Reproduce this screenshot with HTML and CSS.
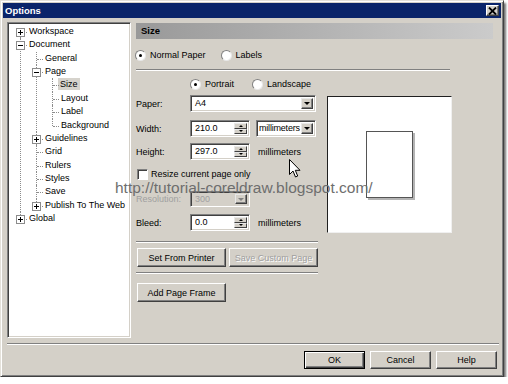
FILE: index.html
```html
<!DOCTYPE html>
<html lang="en">
<head>
    <meta charset="UTF-8">
    <title>Options</title>
    <link rel="stylesheet" href="styles.css">
</head>
<body>
    <div class="window">
        <div class="titlebar">
            <span class="title">Options</span>
            <span class="close">
                <svg width="9" height="8" viewBox="0 0 9 8"><path d="M1 0.5 L8 7.5 M8 0.5 L1 7.5" stroke="#000" stroke-width="1.8"/></svg>
            </span>
        </div>

        <div class="main">
            <div class="tree">
                <ul class="tree-root">
                    <li><span class="box plus"></span><span class="node">Workspace</span></li>
                    <li><span class="box"></span><span class="node">Document</span>
                        <ul>
                            <li><span class="node">General</span></li>
                            <li><span class="box"></span><span class="node">Page</span>
                                <ul>
                                    <li><span class="node selected">Size</span></li>
                                    <li><span class="node">Layout</span></li>
                                    <li><span class="node">Label</span></li>
                                    <li><span class="node">Background</span></li>
                                </ul>
                            </li>
                            <li><span class="box plus"></span><span class="node">Guidelines</span></li>
                            <li><span class="node">Grid</span></li>
                            <li><span class="node">Rulers</span></li>
                            <li><span class="node">Styles</span></li>
                            <li><span class="node">Save</span></li>
                            <li><span class="box plus"></span><span class="node">Publish To The Web</span></li>
                        </ul>
                    </li>
                    <li><span class="box plus"></span><span class="node">Global</span></li>
                </ul>
            </div>

            <div class="panel">
                <div class="header">Size</div>

                <div class="radio-row paper-type">
                    <span class="radio checked"></span><span class="radio-text">Normal Paper</span>
                    <span class="radio labels-radio"></span><span class="radio-text">Labels</span>
                </div>
                <div class="sep wide"></div>

                <div class="panel-body">
                    <div class="form">
                        <div class="radio-row orientation">
                            <span class="radio checked"></span><span class="radio-text">Portrait</span>
                            <span class="radio landscape-radio"></span><span class="radio-text">Landscape</span>
                        </div>

                        <div class="row paper-row">
                            <span class="label">Paper:</span>
                            <div class="select paper-select"><span class="value">A4</span><span class="drop"><i></i></span></div>
                        </div>

                        <div class="row width-row">
                            <span class="label">Width:</span>
                            <div class="spin"><span class="value">210.0</span><span class="arrows"><b class="up"><i></i></b><b class="down"><i></i></b></span></div>
                            <div class="select unit-select"><span class="value">millimeters</span><span class="drop"><i></i></span></div>
                        </div>

                        <div class="row height-row">
                            <span class="label">Height:</span>
                            <div class="spin"><span class="value">297.0</span><span class="arrows"><b class="up"><i></i></b><b class="down"><i></i></b></span></div>
                            <span class="unit">millimeters</span>
                        </div>

                        <div class="check-row">
                            <span class="checkbox"></span><span class="check-text">Resize current page only</span>
                        </div>

                        <div class="row res-row disabled">
                            <span class="label">Resolution:</span>
                            <div class="select res-select"><span class="value">300</span><span class="drop"><i></i></span></div>
                        </div>

                        <div class="row bleed-row">
                            <span class="label">Bleed:</span>
                            <div class="spin"><span class="value">0.0</span><span class="arrows"><b class="up"><i></i></b><b class="down"><i></i></b></span></div>
                            <span class="unit">millimeters</span>
                        </div>

                        <div class="sep form-sep first"></div>
                        <div class="btn-row">
                            <button class="btn wide-btn">Set From Printer</button>
                            <button class="btn wide-btn" disabled>Save Custom Page</button>
                        </div>
                        <div class="sep form-sep second"></div>
                        <div class="btn-row frame-row">
                            <button class="btn wide-btn">Add Page Frame</button>
                        </div>
                    </div>

                    <div class="preview">
                        <div class="page"></div>
                    </div>
                </div>
            </div>
        </div>

        <div class="sep bottom-sep"></div>

        <div class="footer">
            <button class="btn dialog-btn default">OK</button>
            <button class="btn dialog-btn">Cancel</button>
            <button class="btn dialog-btn">Help</button>
        </div>

        <div class="watermark">http://tutorial-coreldraw.blogspot.com/</div>
        <svg class="cursor" width="13" height="20" viewBox="0 0 13 20">
            <path d="M0.5 0.5 L0.5 15.5 L4 12 L6.5 18 L8.7 17 L6.3 11.3 L11 11.3 Z" fill="#fff" stroke="#000" stroke-width="1"/>
        </svg>
    </div>
</body>
</html>
```

FILE: styles.css
```css
body {
    margin: 0;
    background-color: #fff;
    font-family: "Liberation Sans", Arial, sans-serif;
    font-size: 9px;
    color: #000;
}
.window {
    position: relative;
    width: 504px;
    height: 377px;
    box-sizing: border-box;
    background-color: #d4d0c8;
    border: 1px solid;
    border-color: #e4e1da #404040 #404040 #e4e1da;
    box-shadow: inset 1px 1px #fff, inset -1px -1px #808080, 2px 3px 2px rgba(0, 0, 0, 0.55);
    padding: 2px;
    display: flex;
    flex-direction: column;
}
.titlebar {
    height: 15px;
    background-color: #0a246a;
    display: flex;
    align-items: center;
    justify-content: space-between;
    padding: 0 2px 0 2px;
}
.title {
    color: #fff;
    font-weight: bold;
    font-size: 9.5px;
}
.close {
    width: 13px;
    height: 11px;
    box-sizing: border-box;
    background-color: #d4d0c8;
    border: 1px solid;
    border-color: #fff #404040 #404040 #fff;
    box-shadow: inset -1px -1px #808080;
    display: flex;
    align-items: center;
    justify-content: center;
}
.main {
    display: flex;
    margin-top: 4px;
    padding-left: 4px;
    height: 316px;
}

/* tree */
.tree {
    width: 124px;
    height: 316px;
    box-sizing: border-box;
    background-color: #fff;
    border: 1px solid;
    border-color: #808080 #fff #fff #808080;
    box-shadow: inset 1px 1px #404040, inset -1px -1px #d4d0c8;
    padding-top: 2px;
    padding-left: 1px;
}
.tree ul {
    list-style: none;
    margin: 0;
    padding: 0;
}
.tree ul ul {
    margin-left: -3px;
}
.tree li {
    position: relative;
    padding-left: 19px;
    line-height: 13.36px;
}
.tree li::before {
    content: '';
    position: absolute;
    left: 11px;
    top: 0;
    bottom: 0;
    border-left: 1px dotted #8c8c8c;
}
.tree li:last-child::before {
    bottom: auto;
    height: 7px;
}
.tree-root > li:first-child::before {
    top: 7px;
}
.tree li::after {
    content: '';
    position: absolute;
    left: 12px;
    top: 7px;
    width: 6px;
    border-top: 1px dotted #8c8c8c;
}
.box {
    position: absolute;
    left: 7px;
    top: 3px;
    width: 9px;
    height: 9px;
    box-sizing: border-box;
    border: 1px solid #8c8c8c;
    background-color: #fff;
    z-index: 1;
}
.box::before {
    content: '';
    position: absolute;
    left: 1px;
    top: 3px;
    width: 5px;
    height: 1px;
    background-color: #000;
}
.box.plus::after {
    content: '';
    position: absolute;
    left: 3px;
    top: 1px;
    width: 1px;
    height: 5px;
    background-color: #000;
}
.node {
    padding: 0 1px;
}
.node.selected {
    background-color: #d6d3cc;
    margin-left: -2px;
    padding: 1px 2px;
}

/* right panel */
.panel {
    margin-left: 5px;
    width: 359px;
    display: flex;
    flex-direction: column;
}
.header {
    width: 357px;
    height: 16px;
    margin-top: 1px;
    line-height: 16px;
    padding-left: 5px;
    box-sizing: border-box;
    background: linear-gradient(to right, #999999, #cbcbcb);
    font-weight: bold;
    font-size: 9.5px;
}
.radio-row {
    display: flex;
    align-items: center;
    height: 12px;
}
.paper-type {
    margin-top: 10px;
    margin-left: -1px;
}
.radio {
    width: 11px;
    height: 11px;
    box-sizing: border-box;
    border-radius: 50%;
    background-color: #fff;
    border: 1px solid;
    border-color: #808080 #e8e8e8 #e8e8e8 #808080;
    display: flex;
    align-items: center;
    justify-content: center;
}
.radio.checked::after {
    content: '';
    width: 3px;
    height: 3px;
    border-radius: 50%;
    background-color: #000;
}
.radio-text {
    margin-left: 4px;
}
.labels-radio {
    margin-left: 15px;
}
.landscape-radio {
    margin-left: 18px;
}
.sep {
    height: 0;
    border-top: 1px solid #808080;
    border-bottom: 1px solid #fff;
}
.sep.wide {
    width: 314px;
    margin-top: 8px;
}
.panel-body {
    display: flex;
}
.form {
    width: 182px;
    display: flex;
    flex-direction: column;
}
.orientation {
    margin-top: 7px;
    padding-left: 54px;
}
.row {
    display: flex;
    align-items: center;
    height: 17px;
}
.label {
    width: 54px;
}
.paper-row { margin-top: 5px; }
.width-row { margin-top: 8px; }
.height-row { margin-top: 6px; }
.res-row { margin-top: 11px; height: 16px; }
.bleed-row { margin-top: 7px; }

.select,
.spin {
    height: 17px;
    box-sizing: border-box;
    background-color: #fff;
    border: 1px solid;
    border-color: #808080 #fff #fff #808080;
    box-shadow: inset 1px 1px #404040, inset -1px -1px #d4d0c8;
    display: flex;
    padding: 2px;
}
.value {
    flex: 1;
    padding-left: 2px;
    line-height: 11px;
    overflow: hidden;
    white-space: nowrap;
}
.paper-select { width: 126px; }
.unit-select {
    width: 60px;
    margin-left: 6px;
    padding-left: 1px;
}
.unit-select .value {
    padding-left: 1px;
    letter-spacing: -0.2px;
}
.res-select {
    width: 60px;
    height: 16px;
    background-color: #d4d0c8;
    color: #a0a0a0;
}
.drop {
    width: 12px;
    box-sizing: border-box;
    background-color: #d4d0c8;
    border: 1px solid;
    border-color: #e8e8e8 #404040 #404040 #e8e8e8;
    box-shadow: inset -1px -1px #808080;
    display: flex;
    align-items: center;
    justify-content: center;
}
.drop i {
    width: 0;
    height: 0;
    border-left: 3px solid transparent;
    border-right: 3px solid transparent;
    border-top: 3.5px solid #000;
}
.disabled .drop i {
    border-top-color: #808080;
}
.disabled .label {
    color: #a0a0a0;
}
.spin { width: 60px; }
.arrows {
    width: 13px;
    display: flex;
    flex-direction: column;
}
.arrows b {
    flex: 1;
    box-sizing: border-box;
    background-color: #d4d0c8;
    border: 1px solid;
    border-color: #e8e8e8 #404040 #404040 #e8e8e8;
    display: flex;
    align-items: center;
    justify-content: center;
}
.arrows i {
    width: 0;
    height: 0;
    border-left: 2px solid transparent;
    border-right: 2px solid transparent;
}
.arrows .up i { border-bottom: 2px solid #000; }
.arrows .down i { border-top: 2px solid #000; }
.unit {
    margin-left: 8px;
}
.check-row {
    display: flex;
    align-items: center;
    margin-top: 8px;
    height: 12px;
}
.checkbox {
    width: 11px;
    height: 11px;
    box-sizing: border-box;
    margin-left: 1px;
    background-color: #fff;
    border: 1px solid;
    border-color: #808080 #fff #fff #808080;
    box-shadow: inset 1px 1px #404040;
}
.check-text {
    margin-left: 3px;
}
.form-sep {
    width: 182px;
}
.form-sep.first { margin-top: 10px; }
.form-sep.second { margin-top: 5px; }
.btn-row {
    display: flex;
    gap: 3px;
    margin-top: 5px;
    padding-left: 1px;
}
.frame-row { margin-top: 9px; }
.btn {
    font-family: "Liberation Sans", Arial, sans-serif;
    font-size: 9px;
    color: #000;
    background-color: #d4d0c8;
    border: 1px solid;
    border-color: #fff #404040 #404040 #fff;
    box-shadow: inset -1px -1px #808080;
    padding: 0;
}
.btn:disabled {
    color: #a0a0a0;
    text-shadow: 1px 1px #fff;
}
.wide-btn {
    width: 89px;
    height: 19px;
}
.preview {
    width: 125px;
    height: 137px;
    box-sizing: border-box;
    margin-left: 9px;
    margin-top: 25px;
    background-color: #fff;
    border: 1px solid;
    border-color: #202020 #f0f0f0 #f0f0f0 #202020;
    display: flex;
    align-items: center;
    justify-content: center;
}
.page {
    width: 47px;
    height: 67px;
    box-sizing: border-box;
    border: 1px solid #555;
    box-shadow: 2px 2px 0 #b4b4b4;
    background-color: #fff;
}

/* bottom */
.bottom-sep {
    margin: 5px 2px 0 4px;
}
.footer {
    display: flex;
    justify-content: flex-end;
    gap: 5px;
    margin-top: 6px;
    padding-right: 4px;
}
.dialog-btn {
    width: 61px;
    height: 18px;
}
.dialog-btn.default {
    border-color: #000;
    box-shadow: inset 1px 1px #fff, inset -1px -1px #404040, inset -2px -2px #808080;
}
.watermark {
    position: absolute;
    left: 114px;
    top: 179px;
    font-size: 15.5px;
    line-height: 16px;
    color: #6e6e6e;
    white-space: nowrap;
}
.cursor {
    position: absolute;
    left: 288px;
    top: 158px;
}
```
